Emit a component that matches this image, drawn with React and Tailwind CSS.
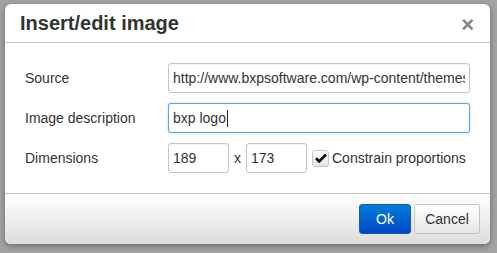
import { useState } from 'react';

const font = { fontFamily: '"Liberation Sans", Arial, sans-serif' };

const inputBase =
  'h-[30px] rounded-[3px] border bg-white px-[4px] text-[14px] text-[#333] outline-none border-[#c5c5c5] shadow-[inset_0_1px_1px_rgba(0,0,0,0.06)]';

export default function App() {
  const [constrain, setConstrain] = useState(true);

  return (
    <div className="w-[497px] h-[253px] bg-[#a3a3a3] pt-[4px] pl-[5px] overflow-hidden" style={font}>
      <div className="w-[485px] h-[240px] bg-white rounded-[6px] shadow-[0_2px_6px_rgba(0,0,0,0.35)] flex flex-col overflow-hidden">
        {/* Header */}
        <div className="h-[39px] border-b border-[#c5c5c5] flex items-center justify-between pl-[15px] pr-[16px] shrink-0">
          <h1 className="text-[20px] font-bold text-[#333] leading-none">Insert/edit image</h1>
          <span className="text-[22px] font-bold text-[#858585] leading-none mt-[4px]">×</span>
        </div>

        {/* Body */}
        <div className="flex flex-col gap-[10px] px-[20px] pt-[20px] pb-[20px] shrink-0">
          <div className="flex items-center">
            <label className="w-[143px] text-[14px] text-[#333]">Source</label>
            <input
              readOnly
              className={inputBase + ' w-[302px]'}
              style={font}
              value="http://www.bxpsoftware.com/wp-content/themes/bxp/images/logo.png"
            />
          </div>
          <div className="flex items-center">
            <label className="w-[143px] text-[14px] text-[#333]">Image description</label>
            <div className="w-[302px] h-[30px] rounded-[3px] border border-[#59a5e5] bg-white px-[4px] flex items-center text-[14px] text-[#333] shadow-[0_0_2px_rgba(82,168,236,0.6)]">
              <span>bxp logo</span>
              <span className="inline-block w-px h-[17px] bg-[#222] ml-[1px]" />
            </div>
          </div>
          <div className="flex items-center">
            <label className="w-[143px] text-[14px] text-[#333]">Dimensions</label>
            <input readOnly className={inputBase + ' w-[61px]'} style={font} value="189" />
            <span className="w-[17px] text-center text-[14px] text-[#333]">x</span>
            <input readOnly className={inputBase + ' w-[61px]'} style={font} value="173" />
            <button
              type="button"
              onClick={() => setConstrain(!constrain)}
              className="ml-[5px] flex items-center gap-[3px] text-[14px] text-[#333]"
            >
              <span className="w-[17px] h-[17px] rounded-[3px] border border-[#c5c5c5] bg-gradient-to-b from-white to-[#e6e6e6] flex items-center justify-center">
                {constrain && (
                  <svg width="12" height="10" viewBox="0 0 12 10">
                    <path d="M1 5.2 L4.2 8.4 L11 1.6" fill="none" stroke="#111" strokeWidth="2.8" />
                  </svg>
                )}
              </span>
              Constrain proportions
            </button>
          </div>
        </div>

        {/* Footer */}
        <div className="flex-1 border-t border-[#c5c5c5] bg-gradient-to-b from-white to-[#dddddd] flex justify-end items-start gap-[3px] pt-[10px] pr-[10px]">
          <button
            type="button"
            className="w-[52px] h-[30px] rounded-[3px] border border-[#0b5fb5] bg-gradient-to-b from-[#0a7dd6] to-[#0046c8] text-white text-[14px]"
          >
            Ok
          </button>
          <button
            type="button"
            className="w-[66px] h-[30px] rounded-[3px] border border-[#c5c5c5] bg-gradient-to-b from-white to-[#e6e6e6] text-[#333] text-[14px]"
          >
            Cancel
          </button>
        </div>
      </div>
    </div>
  );
}
